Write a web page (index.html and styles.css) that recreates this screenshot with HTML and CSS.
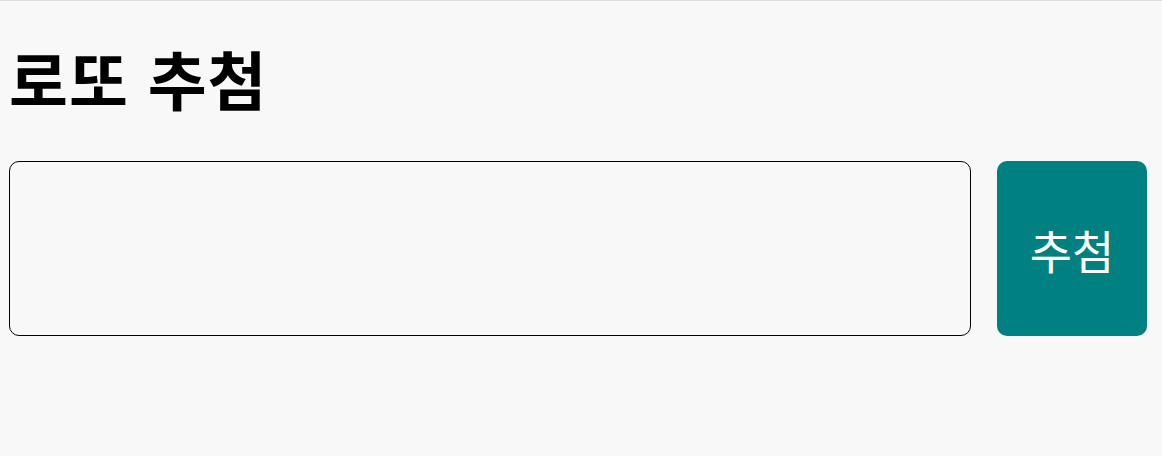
FILE: index.html
```html
<!DOCTYPE html>
<html lang="ko">
<head>
<meta charset="utf-8">
<title>로또 추첨</title>
<link rel="stylesheet" href="styles.css">
</head>
<body>
<div class="topline"></div>
<main class="page">
  <h1 class="title">로또 추첨</h1>
  <div class="row">
    <div class="box"></div>
    <button class="draw">추첨</button>
  </div>
</main>
</body>
</html>
```
FILE: styles.css
```css
html, body {
  margin: 0;
  padding: 0;
  background: #f8f8f8;
  font-family: "Noto Sans CJK KR", "Noto Sans", sans-serif;
}
.topline {
  height: 1px;
  background: #dcdcdc;
}
.page {
  padding: 0 15px 0 9px;
}
.title {
  margin: 0;
  padding-top: 28px;
  font-size: 64px;
  font-weight: 700;
  letter-spacing: 1px;
  line-height: 96px;
  color: #000;
}
.row {
  display: flex;
  gap: 26px;
  margin-top: 36px;
}
.box {
  flex: 1;
  height: 173px;
  border: 1px solid #000;
  border-radius: 10px;
}
.draw {
  width: 150px;
  height: 175px;
  border: none;
  border-radius: 10px;
  background: #008080;
  color: #fff;
  font-family: "Noto Sans CJK KR", "Noto Sans", sans-serif;
  font-size: 46px;
  padding: 0;
}
```
